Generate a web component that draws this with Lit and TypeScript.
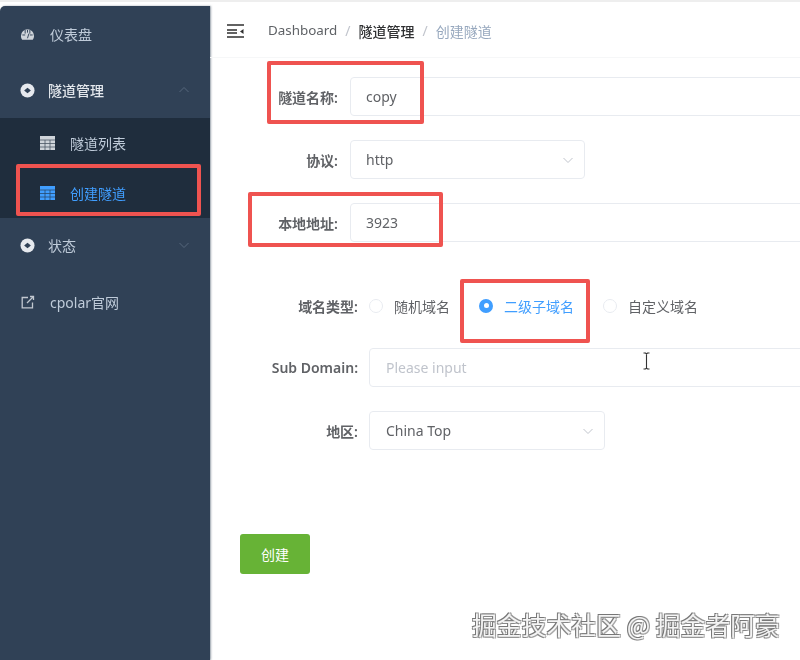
import { LitElement, html, css, svg } from "lit";
import { customElement } from "lit/decorators.js";

const chevron = (up: boolean) => svg`<svg class="chev" viewBox="0 0 12 12" width="12" height="12"><path d="${up ? "M1.5 8 6 3.5 10.5 8" : "M1.5 4 6 8.5 10.5 4"}" fill="none" stroke="currentColor" stroke-width="1"/></svg>`;
const nested = svg`<svg viewBox="0 0 16 16" width="15" height="15"><circle cx="8" cy="8" r="7.5" fill="#e6e9ee"/><path d="M4.4 8 8 5 11.6 8 8 11Z" fill="#304156"/></svg>`;
const gauge = svg`<svg viewBox="0 0 16 16" width="15" height="15"><path d="M8 2.5a7 7 0 0 0-7 7c0 1.6.5 3 1.4 4h11.2a6.8 6.8 0 0 0 1.4-4 7 7 0 0 0-7-7Z" fill="#cfd4da"/><path d="M5.5 3v4M8 3v3M10.5 3v4M2.5 8.5h3M10.5 8.5h3M8 12 9.5 7" stroke="#304156" stroke-width="1"/></svg>`;
const table = (c: string, line: string) => svg`<svg viewBox="0 0 15 14" width="15" height="14"><rect width="15" height="14" fill="${c}"/><path d="M0 4h15M0 7.5h15M0 11h15M5 4V14M10 4V14" stroke="${line}" stroke-width=".8" opacity=".75"/></svg>`;
const external = svg`<svg viewBox="0 0 14 14" width="14" height="14"><path d="M7 2.5H1.2v10.3h10.3V7.5" fill="none" stroke="#c2c8d0" stroke-width="1.3"/><path d="M6 8l6-6M9 1.5h3.5V5" fill="none" stroke="#c2c8d0" stroke-width="1.3"/></svg>`;
const hamburger = svg`<svg viewBox="0 0 17 14" width="17" height="14"><path d="M0 1h17M0 6h10M0 9h10M0 13h17" stroke="#2f2f2f" stroke-width="1.5"/><path d="M16.5 5 13 7.5 16.5 10Z" fill="#2f2f2f"/></svg>`;
const ibeam = svg`<svg viewBox="0 0 9 18" width="9" height="18"><path d="M1.5 1h2l1 1 1-1h2M4.5 2v14M1.5 17h2l1-1 1 1h2" fill="none" stroke="#333" stroke-width="1.1"/></svg>`;

@customElement("app-root")
export class AppRoot extends LitElement {
  static styles = css`
    :host {
      display: block;
      width: 800px;
      height: 660px;
      overflow: hidden;
      position: relative;
      background: #fff;
      font-family: "Noto Sans", "Noto Sans CJK SC", sans-serif;
      font-size: 14px;
      color: #606266;
    }
    .page {
      display: flex;
      flex-direction: column;
      height: 660px;
      filter: blur(0.6px);
    }
    .strip {
      height: 6px;
      flex: none;
      background: #fff;
      border-top: 2px solid #eeeeee;
      box-sizing: border-box;
    }
    .body { display: flex; flex: 1; min-height: 0; }
    .side {
      width: 210px;
      flex: none;
      background: #304156;
      border-top-left-radius: 5px;
      color: #bfcbd9;
      display: flex;
      flex-direction: column;
      box-shadow: 1px 0 2px rgba(48, 65, 86, .5);
    }
    .item {
      height: 56px;
      display: flex;
      align-items: center;
      padding: 0 20px;
      flex: none;
      font-size: 14px;
    }
    .item .icon { width: 15px; display: flex; justify-content: center; margin-right: 13px; }
    .item .label { flex: 1; }
    .first .icon { margin-right: 15px; }
    .link { margin-top: 1px; }
    .link .icon { margin-right: 15px; }
    .bright { color: #e3e7ec; font-weight: 500; }
    .chev { color: #56677c; }
    .sub { background: #1f2d3d; flex: none; }
    .subitem {
      height: 50px;
      display: flex;
      align-items: center;
      padding-left: 40px;
      gap: 15px;
      font-size: 14px;
    }
    .subicon { display: flex; }
    .subitem.active { color: #409eff; }
    .status { margin-top: -1px; }
    .main { flex: 1; display: flex; flex-direction: column; min-width: 0; }
    .nav {
      height: 52px;
      flex: none;
      display: flex;
      align-items: center;
      padding: 0 0 2px 17px;
      border-bottom: 1px solid #f6f7f8;
      box-sizing: border-box;
      font-size: 14px;
    }
    .crumbs { display: flex; margin-left: 24px; gap: 8px; color: #97a8be; }
    .crumbs b { font-weight: 500; color: #303133; }
    .crumbs .plain { color: #5f6266; font-size: 13.4px; }
    .crumbs .sep { color: #c0c4cc; }
    .form { display: flex; flex-direction: column; padding: 19px 0 0 30px; }
    .row { display: flex; align-items: center; height: 39px; margin-bottom: 24px; }
    .row label {
      width: 98px;
      margin-right: 12px;
      text-align: right;
      font-weight: 600;
      font-size: 14px;
      color: #606266;
      flex: none;
    }
    .row.wide label { width: 118px; margin-right: 11px; }
    .control {
      box-sizing: border-box;
      height: 39px;
      border: 1px solid #e8ebf0;
      border-radius: 4px;
      display: flex;
      align-items: center;
      padding: 0 15px;
      flex: none;
      color: #606266;
      font-size: 14px;
    }
    .wide .control { padding-left: 16px; }
    .full { width: 470px; }
    .select { justify-content: space-between; padding-right: 10px; color: #606266; }
    .select .chev { color: #c0c4cc; }
    .s1 { width: 235px; }
    .s2 { width: 236px; }
    .placeholder { color: #c0c4cc; }
    .radio-row { margin-top: 20px; margin-bottom: 23px; height: 39px; }
    .radio { display: flex; align-items: center; gap: 11px; margin-right: 29px; font-size: 14px; color: #606266; }
    .radio i {
      width: 14px; height: 14px; border: 1px solid #e8ebf0; border-radius: 50%; box-sizing: border-box; flex: none;
    }
    .radio.on { color: #409eff; }
    .radio.on i { background: #409eff; border: 4px solid #409eff; position: relative; }
    .radio.on i::after {
      content: ""; position: absolute; left: 50%; top: 50%; width: 5px; height: 5px; margin: -2.5px; background: #fff; border-radius: 50%;
    }
    .btn {
      width: 70px;
      height: 40px;
      margin-top: 60px;
      background: #67b336;
      color: #fff;
      border-radius: 3px;
      display: flex;
      align-items: center;
      justify-content: center;
      font-size: 14px;
    }
    .mark {
      position: absolute;
      box-sizing: border-box;
      border: 4px solid #ef5350;
      border-radius: 2px;
      filter: blur(0.3px);
    }
    .cursor { position: absolute; left: 642px; top: 352px; display: flex; }
    .wm {
      position: absolute;
      left: 472px;
      top: 606px;
      font-family: "Noto Sans CJK SC", sans-serif;
      font-size: 24.85px;
      line-height: 36px;
      color: #f4f4f4;
      text-shadow: -1px -1px 0 #777, 1px -1px 0 #999, -1px 1px 0 #888, 1px 1px 0 #aaa;
      white-space: nowrap;
    }
  `;

  render() {
    return html`
      <div class="page">
        <div class="strip"></div>
        <div class="body">
          <aside class="side">
            <div class="item first"><span class="icon">${gauge}</span><span class="label">仪表盘</span></div>
            <div class="item bright"><span class="icon">${nested}</span><span class="label">隧道管理</span>${chevron(true)}</div>
            <div class="sub">
              <div class="subitem"><span class="subicon">${table("#cfd4da", "#1f2d3d")}</span><span class="label">隧道列表</span></div>
              <div class="subitem active"><span class="subicon">${table("#409eff", "#1f2d3d")}</span><span class="label">创建隧道</span></div>
            </div>
            <div class="item status"><span class="icon">${nested}</span><span class="label">状态</span>${chevron(false)}</div>
            <div class="item link"><span class="icon">${external}</span><span class="label">cpolar官网</span></div>
          </aside>
          <main class="main">
            <div class="nav">
              ${hamburger}
              <div class="crumbs">
                <span class="plain">Dashboard</span><span class="sep">/</span>
                <b>隧道管理</b><span class="sep">/</span><span>创建隧道</span>
              </div>
            </div>
            <div class="form">
              <div class="row"><label>隧道名称:</label><div class="control full">copy</div></div>
              <div class="row"><label>协议:</label><div class="control select s1">http ${chevron(false)}</div></div>
              <div class="row"><label>本地地址:</label><div class="control full">3923</div></div>
              <div class="row wide radio-row">
                <label>域名类型:</label>
                <div class="radio"><i></i>随机域名</div>
                <div class="radio on"><i></i>二级子域名</div>
                <div class="radio"><i></i>自定义域名</div>
              </div>
              <div class="row wide"><label>Sub Domain:</label><div class="control full"><span class="placeholder">Please input</span></div></div>
              <div class="row wide"><label>地区:</label><div class="control select s2">China Top ${chevron(false)}</div></div>
              <div class="btn">创建</div>
            </div>
          </main>
        </div>
      </div>
      <div class="mark" style="left:267px;top:61px;width:157px;height:63px"></div>
      <div class="mark" style="left:16px;top:164px;width:185px;height:52px"></div>
      <div class="mark" style="left:248px;top:192px;width:195px;height:55px"></div>
      <div class="mark" style="left:460px;top:279px;width:130px;height:64px"></div>
      <div class="cursor">${ibeam}</div>
      <div class="wm">掘金技术社区 @ 掘金者阿豪</div>
    `;
  }
}
